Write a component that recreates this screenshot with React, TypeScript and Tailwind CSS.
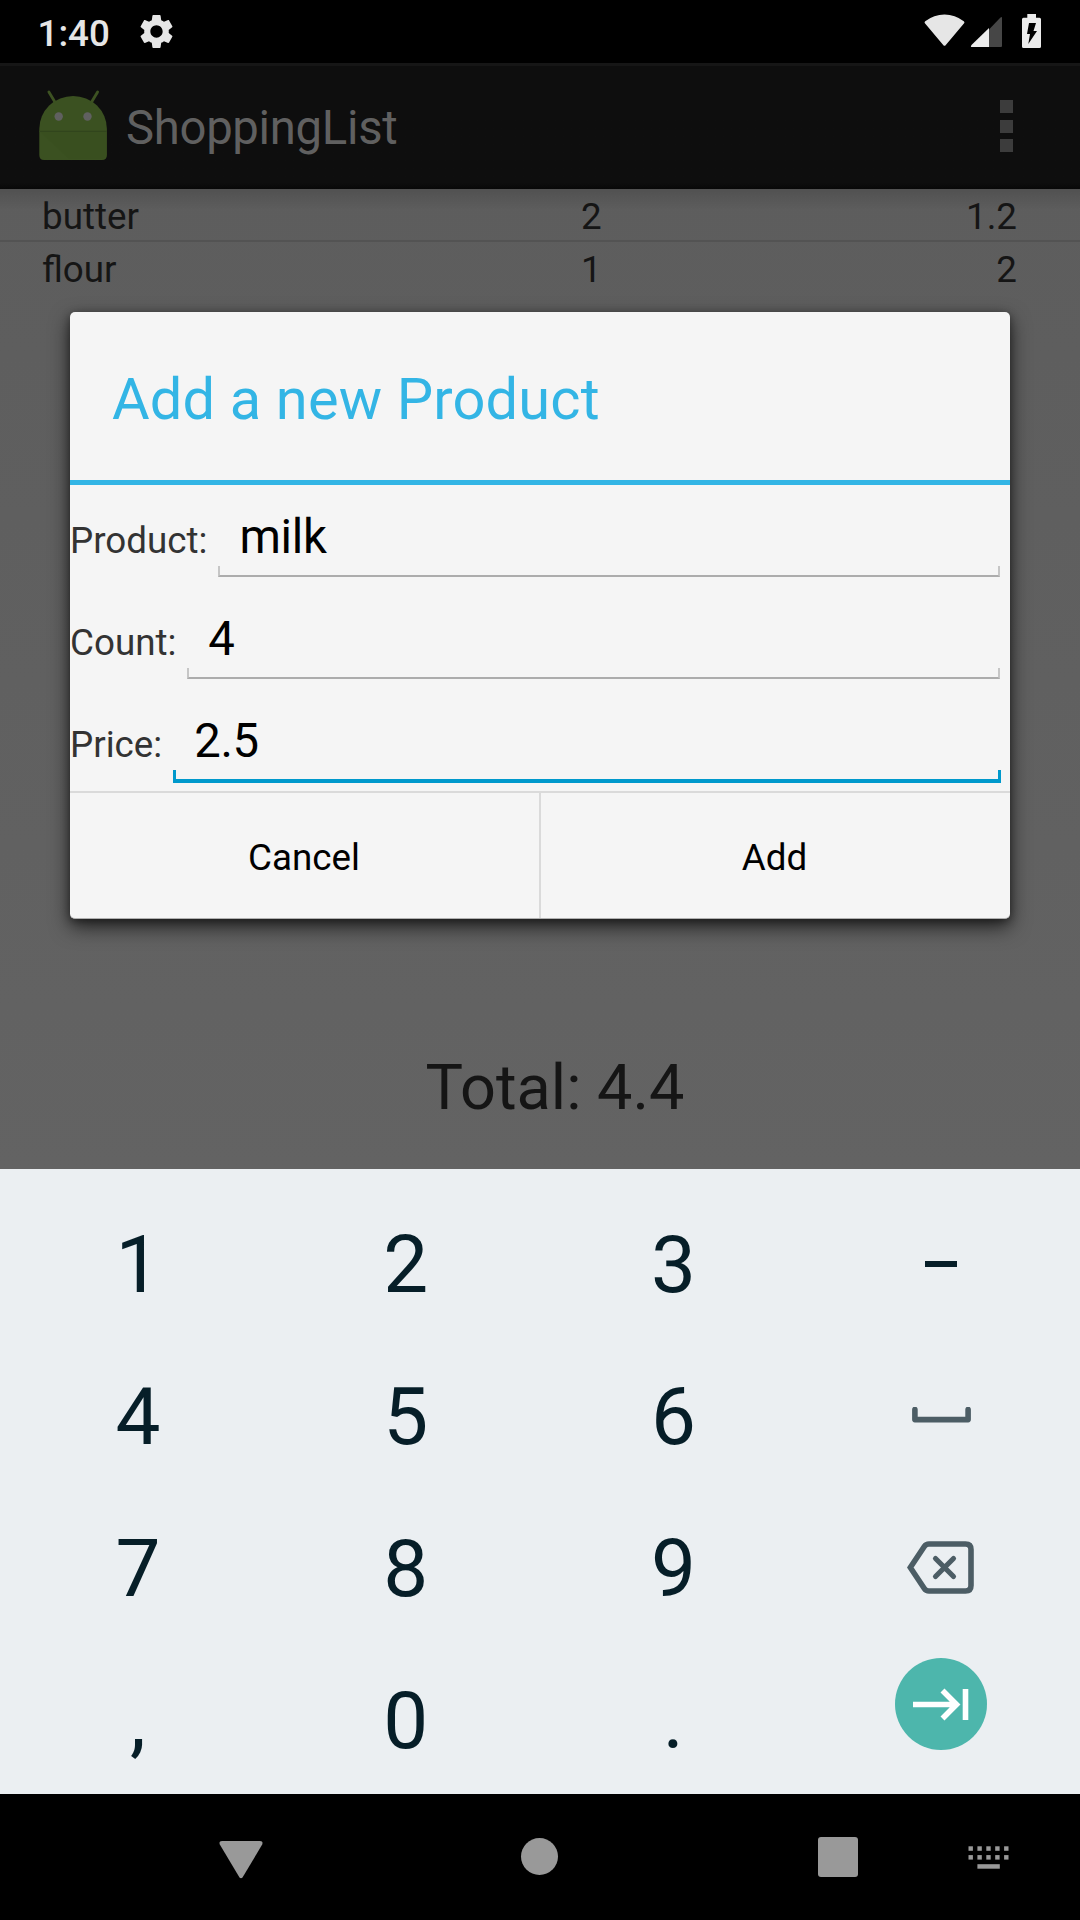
import type { ReactNode } from 'react';

type Product = { name: string; count: string; price: string };

const products: Product[] = [
  { name: 'butter', count: '2', price: '1.2' },
  { name: 'flour', count: '1', price: '2' },
];

function StatusBar() {
  return (
    <header className="flex h-[63px] items-start bg-black text-[#e6e6e6]">
      <span className="ml-[37.5px] mt-[12px] text-[36.75px] leading-[43px] font-medium">1:40</span>
      <svg className="ml-[26.5px] mt-[11px] size-[41px]" viewBox="0 0 24 24" fill="currentColor">
        <path d="M19.14 12.94c.04-.3.06-.61.06-.94 0-.32-.02-.64-.07-.94l2.03-1.58c.18-.14.23-.41.12-.61l-1.92-3.32c-.12-.22-.37-.29-.59-.22l-2.39.96c-.5-.38-1.03-.7-1.62-.94l-.36-2.54c-.04-.24-.24-.41-.48-.41h-3.84c-.24 0-.43.17-.47.41l-.36 2.54c-.59.24-1.13.57-1.62.94l-2.39-.96c-.22-.08-.47 0-.59.22L2.74 8.87c-.12.21-.08.47.12.61l2.03 1.58c-.05.3-.09.63-.09.94s.02.64.07.94l-2.03 1.58c-.18.14-.23.41-.12.61l1.92 3.32c.12.22.37.29.59.22l2.39-.96c.5.38 1.03.7 1.62.94l.36 2.54c.05.24.24.41.48.41h3.84c.24 0 .44-.17.47-.41l.36-2.54c.59-.24 1.13-.56 1.62-.94l2.39.96c.22.08.47 0 .59-.22l1.92-3.32c.12-.22.07-.47-.12-.61l-2.01-1.58zM12 15.6c-1.98 0-3.6-1.62-3.6-3.6s1.62-3.6 3.6-3.6 3.6 1.62 3.6 3.6-1.62 3.6-3.6 3.6z" />
      </svg>
      <div className="ml-auto mr-[39px] mt-[14px] flex items-start">
        <svg className="h-[34px] w-[41px]" viewBox="0 0 41 34" fill="currentColor">
          <path d="M.9 9.2Q0 8 1.2 7.200Q10 0.400 20.500 0.400T39.800 7.200Q41 8 40.100 9.200L21.600 31.200Q20.500 32.300 19.400 31.200Z" />
        </svg>
        <svg className="ml-[5px] mt-px h-[33px] w-[33px]" viewBox="0 0 33 33">
          <path d="M19 14.500L30 3Q32 1 32 3V31Q32 32 31 32H19Z" fill="#464646" />
          <path d="M19 13V32H2Q0 32 1.500 30Z" fill="#ececec" />
        </svg>
        <svg className="ml-[19px] h-[34px] w-[19px]" viewBox="0 0 19 34">
          <path d="M5.300 0H14V3.700H17.500Q19 3.700 19 5.200V32.500Q19 34 17.500 34H1.500Q0 34 0 32.500V5.200Q0 3.700 1.500 3.700H5.300Z" fill="#ececec" />
          <path d="M7 9H14L11.500 17H15L6.300 30L8 20H5Z" fill="#000" />
        </svg>
      </div>
    </header>
  );
}

function AppIcon() {
  return (
    <svg className="ml-[39px] mt-[22px] h-[72px] w-[69px]" viewBox="0 0 69 72">
      <path d="M9.900 4L16.500 15M58.600 4L52 15" stroke="#3d5222" strokeWidth="2.800" strokeLinecap="round" />
      <path d="M.3 43V41A33.700 33 0 0 1 67.900 41V67Q67.900 72 63 72H5Q.3 72 .3 67Z" fill="#3b5121" />
      <path d="M1 44H67V67Q67 70 63 71H30Z" fill="#364c1e" opacity=".35" />
      <path d="M.3 43.300H67.900" stroke="#31451c" strokeWidth="1.200" />
      <circle cx="19.700" cy="28.500" r="4.200" fill="#606060" />
      <circle cx="48.500" cy="28.500" r="4.200" fill="#606060" />
    </svg>
  );
}

function ActionBar() {
  return (
    <div className="flex h-[126px] items-start border-t-[3px] border-[#161616] bg-linear-to-b from-[#0e0e0e] from-95% to-[#080808]">
      <AppIcon />
      <h1 className="ml-[18px] mt-[35px] text-[47.25px] leading-[55px] font-normal tracking-[-0.3px] text-[#606060]">ShoppingList</h1>
      <div className="ml-auto mr-[67px] mt-[34px] flex flex-col gap-[6.5px]">
        <i className="size-[13px] bg-[#3c3c3c]" />
        <i className="size-[13px] bg-[#3c3c3c]" />
        <i className="size-[13px] bg-[#3c3c3c]" />
      </div>
    </div>
  );
}

function ProductList() {
  return (
    <ul className="bg-linear-to-b from-black/13 to-transparent to-20% text-[36.75px] leading-[43px] text-[#151515]">
      {products.map((p, i) => (
        <li
          key={p.name}
          className={
            i === 0
              ? 'grid h-[53px] grid-cols-[539px_1fr_1fr] border-b-2 border-[#535353] pt-[6px] pr-[63px] pl-[42px]'
              : 'grid h-[53px] grid-cols-[539px_1fr_1fr] pt-[6px] pr-[63px] pl-[42px]'
          }
        >
          <span>{p.name}</span>
          <span>{p.count}</span>
          <span className="text-right">{p.price}</span>
        </li>
      ))}
    </ul>
  );
}

function Field({ label, value, focused = false }: { label: string; value: string; focused?: boolean }) {
  return (
    <div className="flex h-[102px] items-start">
      <label className="mt-[34px] text-[36.75px] leading-[43px] text-[#333333]">{label}</label>
      <div className="mr-[10px] ml-[10.5px] flex-1 pt-[25px]">
        <div className="pl-[21.5px] text-[47.25px] leading-[55px] tracking-[-0.3px] text-black">{value}</div>
        {focused ? (
          <div className="-mr-px mt-px h-[13px] border-x-[3px] border-b-4 border-[#0099cc]" />
        ) : (
          <div className="mt-px h-[11px] border-x-2 border-b-2 border-x-[#c6c6c6] border-b-[#acacac]" />
        )}
      </div>
    </div>
  );
}

function AddDialog() {
  return (
    <section className="absolute top-[312px] left-[70px] flex h-[607px] w-[940px] flex-col overflow-hidden rounded-[5px] border-b border-[#b0b0b0] bg-[#f5f5f5] shadow-[0_8px_20px_rgba(0,0,0,0.65),0_2px_8px_rgba(0,0,0,0.4)]">
      <h2 className="h-[168px] pt-[53px] pl-[42px] text-[57.75px] leading-[68px] font-normal tracking-[0.16px] text-[#33b5e5]">
        Add a new Product
      </h2>
      <div className="h-[5px] bg-[#33b5e5]" />
      <Field label="Product:" value="milk" />
      <Field label="Count:" value="4" />
      <Field label="Price:" value="2.5" focused />
      <div className="flex flex-1 border-t-2 border-[#dadada] text-[36.75px] text-black">
        <button className="w-[471px] border-r-2 border-[#dadada] pt-[4px] pr-px">Cancel</button>
        <button className="flex-1 pt-[4px] pr-[2px]">Add</button>
      </div>
    </section>
  );
}

function Key({ children }: { children: ReactNode }) {
  return <button className="flex h-[152px] items-center justify-center pt-[5px]">{children}</button>;
}

function Keyboard() {
  return (
    <div className="grid h-[625px] grid-cols-4 bg-[#ebeff2] pt-[17px] pr-[5px] pl-[4px] text-[80px] leading-[94px] text-[#061e28]">
      <Key>1</Key>
      <Key>2</Key>
      <Key>3</Key>
      <Key>
        <i className="mb-[2px] h-[6px] w-[32px] bg-[#061e28]" />
      </Key>
      <Key>4</Key>
      <Key>5</Key>
      <Key>6</Key>
      <Key>
        <svg className="mb-[3px] h-[16px] w-[59px]" viewBox="0 0 59 16">
          <path d="M2.900 2.500V12.600H56.100V2.500" fill="none" stroke="#4c5d65" strokeWidth="5.600" strokeLinecap="round" strokeLinejoin="round" />
        </svg>
      </Key>
      <Key>7</Key>
      <Key>8</Key>
      <Key>9</Key>
      <Key>
        <svg className="mr-[2px] mb-[2px] h-[53px] w-[67px]" viewBox="0 0 67 53" fill="none" stroke="#4c5d65">
          <path d="M3.300 26.500L17.300 5.500Q19 3 22 3H58.500Q64 3 64 8.500V44.500Q64 50 58.500 50H22Q19 50 17.300 47.500Z" strokeWidth="5.600" />
          <path d="M28.500 17.500L46.500 35.500M46.500 17.500L28.500 35.500" strokeWidth="5.200" strokeLinecap="round" />
        </svg>
      </Key>
      <Key>,</Key>
      <Key>0</Key>
      <Key>.</Key>
      <Key>
        <svg className="mb-[33px] size-[92px]" viewBox="0 0 92 92">
          <circle cx="46" cy="46" r="46" fill="#4db6ac" />
          <path d="M18 46.500H60M47.500 32.500L61.500 46.500L47.500 60.500M70.500 31V62" fill="none" stroke="#fff" strokeWidth="5.600" />
        </svg>
      </Key>
    </div>
  );
}

const dotColumns = [0, 8.9, 17.8, 26.7, 35.6];

function NavBar() {
  return (
    <nav className="flex h-[126px] items-start bg-black text-[#999999]">
      <svg className="mt-[46px] ml-[219px] h-[39px] w-[44px]" viewBox="0 0 44 39" fill="currentColor">
        <path d="M3 1H41Q44.500 1 43.200 4.500L23.500 37.500Q22 39 20.500 37.500L.8 4.500Q-.5 1 3 1Z" />
      </svg>
      <i className="mt-[44px] ml-[258px] size-[37px] rounded-full bg-[#999999]" />
      <i className="mt-[43px] ml-[260px] size-[40px] rounded-[3px] bg-[#999999]" />
      <svg className="mt-[52px] ml-[110px] h-[23px] w-[41px]" viewBox="0 0 41 23" fill="currentColor">
        {dotColumns.map((x) => (
          <g key={x}>
            <rect x={x + 0.5} y="0.300" width="4.400" height="4.500" />
            <rect x={x + 0.5} y="9.100" width="4.400" height="4.500" />
          </g>
        ))}
        <rect x="9.400" y="18.200" width="22.400" height="4.500" />
      </svg>
    </nav>
  );
}

export default function App() {
  return (
    <main className="relative flex h-[1920px] w-[1080px] flex-col overflow-hidden bg-black font-[Roboto,sans-serif]">
      <StatusBar />
      <ActionBar />
      <div className="flex h-[980px] flex-col bg-linear-to-b from-[#5d5d5d] to-[#636363]">
        <ProductList />
        <p className="mt-auto mb-[44px] pl-[30px] text-center text-[63px] leading-[74px] text-[#151515]">Total: 4.4</p>
      </div>
      <Keyboard />
      <NavBar />
      <AddDialog />
    </main>
  );
}
